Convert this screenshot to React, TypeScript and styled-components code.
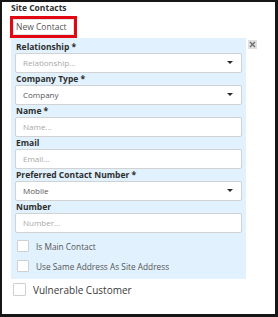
import React from "react";
import styled, { createGlobalStyle } from "styled-components";

const GlobalStyle = createGlobalStyle`
  html, body {
    margin: 0;
    padding: 0;
    background: #fff;
  }
  body {
    font-family: "Open Sans", "Liberation Sans", sans-serif;
  }
`;

const Frame = styled.div`
  box-sizing: border-box;
  width: 278px;
  height: 317px;
  border-style: solid;
  border-color: #161616;
  border-width: 2px 3px 3px 2px;
  padding: 1px 0 0 8px;
  background: #fff;
`;

const SectionTitle = styled.div`
  font-size: 8.5px;
  font-weight: 700;
  color: #2e2e2e;
  line-height: 10px;
  padding-left: 1px;
`;

const Highlight = styled.div`
  display: inline-flex;
  border: 3px solid #e30613;
  margin-top: 2px;
`;

const NewContactButton = styled.button`
  font-family: inherit;
  font-size: 8.5px;
  color: #555;
  background: #fff;
  border: 1px solid #e2e2e2;
  padding: 0 4px 0 2px;
  height: 16px;
  width: 61px;
  text-align: left;
  cursor: pointer;
`;

const PanelRow = styled.div`
  display: flex;
  align-items: flex-start;
  gap: 2px;
`;

const Panel = styled.div`
  width: 235px;
  box-sizing: border-box;
  background: #e1f1fd;
  padding: 3px 4px 6px 4px;
  margin-left: 1px;
`;

const CloseButton = styled.button`
  width: 9px;
  height: 9px;
  margin-top: 2px;
  padding: 0;
  border: none;
  background: #e0e0e0;
  display: flex;
  align-items: center;
  justify-content: center;
`;

const Field = styled.div`
  display: flex;
  flex-direction: column;
`;

const Label = styled.label`
  font-size: 8.5px;
  font-weight: 700;
  color: #2e2e2e;
  line-height: 10px;
  height: 10px;
  margin: 1px 0 1px 1px;
`;

const Box = styled.div<{ $filled?: boolean }>`
  box-sizing: border-box;
  height: 20px;
  width: 227px;
  background: #fff;
  border: 1.5px solid #d2d2d2;
  border-radius: 2px;
  display: flex;
  align-items: center;
  justify-content: space-between;
  padding: 0 8px 0 7px;
  font-size: 8px;
  color: ${(p) => (p.$filled ? "#555" : "#a8a8a8")};
`;

const Caret = styled.span`
  width: 0;
  height: 0;
  border-left: 3px solid transparent;
  border-right: 3px solid transparent;
  border-top: 3.5px solid #2a2a2a;
`;

const CheckRow = styled.label<{ $big?: boolean }>`
  display: flex;
  align-items: center;
  gap: 7px;
  font-size: ${(p) => (p.$big ? "10px" : "8.3px")};
  color: ${(p) => (p.$big ? "#3a3a3a" : "#555")};
  height: ${(p) => (p.$big ? "14px" : "13px")};
`;

const CheckBox = styled.span<{ $big?: boolean }>`
  box-sizing: border-box;
  width: ${(p) => (p.$big ? "13px" : "12px")};
  height: ${(p) => (p.$big ? "13px" : "12px")};
  background: #fff;
  border: 1.5px solid #cfcfcf;
  border-radius: 1px;
`;

const Checks = styled.div`
  display: flex;
  flex-direction: column;
  gap: 7px;
  padding: 7px 0 0 2px;
`;

const Footer = styled.div`
  padding: 4px 0 0 3px;
`;

type FieldDef = { label: string; text: string; select?: boolean; filled?: boolean };

const fields: FieldDef[] = [
  { label: "Relationship *", text: "Relationship...", select: true },
  { label: "Company Type *", text: "Company", select: true, filled: true },
  { label: "Name *", text: "Name..." },
  { label: "Email", text: "Email..." },
  { label: "Preferred Contact Number *", text: "Mobile", select: true, filled: true },
  { label: "Number", text: "Number..." },
];

export default function App() {
  return (
    <>
      <GlobalStyle />
      <Frame>
        <SectionTitle>Site Contacts</SectionTitle>
        <Highlight>
          <NewContactButton>New Contact</NewContactButton>
        </Highlight>
        <PanelRow>
          <Panel>
            {fields.map((f) => (
              <Field key={f.label}>
                <Label>{f.label}</Label>
                <Box $filled={f.filled}>
                  <span>{f.text}</span>
                  {f.select && <Caret />}
                </Box>
              </Field>
            ))}
            <Checks>
              <CheckRow>
                <CheckBox />
                Is Main Contact
              </CheckRow>
              <CheckRow>
                <CheckBox />
                Use Same Address As Site Address
              </CheckRow>
            </Checks>
          </Panel>
          <CloseButton aria-label="Remove contact">
            <svg width="7" height="7" viewBox="0 0 7 7">
              <path d="M1 1L6 6M6 1L1 6" stroke="#707070" strokeWidth="1.4" />
            </svg>
          </CloseButton>
        </PanelRow>
        <Footer>
          <CheckRow $big>
            <CheckBox $big />
            Vulnerable Customer
          </CheckRow>
        </Footer>
      </Frame>
    </>
  );
}
